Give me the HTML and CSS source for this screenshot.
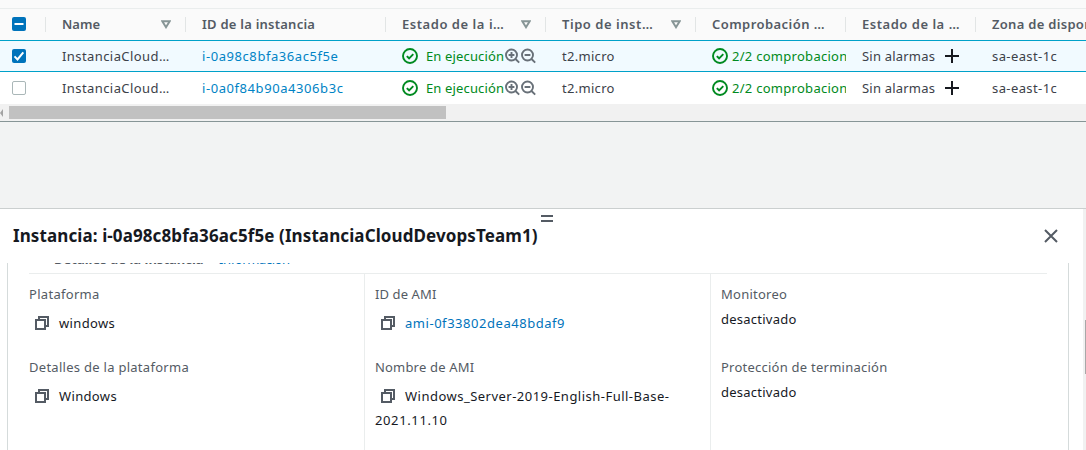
FILE: index.html
```html
<!DOCTYPE html>
<html lang="es">
<head>
<meta charset="utf-8">
<title>Instancias</title>
<link rel="stylesheet" href="styles.css">
</head>
<body>
<svg class="defs" width="0" height="0">
  <symbol id="ok" viewBox="0 0 16 16"><circle cx="8" cy="8" r="7"/><path d="M4.8 8.1l2.3 2.2 4.2-4.2"/></symbol>
  <symbol id="plus-lens" viewBox="0 0 16 16"><circle cx="6.5" cy="7" r="5.5"/><path d="M10.5 11l3.7 3.7M3.6 7h5.8M6.5 4.1v5.8"/></symbol>
  <symbol id="minus-lens" viewBox="0 0 16 16"><circle cx="6.5" cy="7" r="5.5"/><path d="M10.5 11l3.7 3.7M3.6 7h5.8"/></symbol>
  <symbol id="copy" viewBox="0 0 14 14"><path d="M1 4h9v9H1zM4 4V1h9v9h-3"/></symbol>
  <symbol id="sort" viewBox="0 0 10 9"><path d="M1.3 1.3h7.4L5 7.2z"/></symbol>
</svg>
<section class="instances">
  <div class="toolbar"></div>
  <div class="row head">
    <div class="pick"><span class="box on"><svg viewBox="0 0 14 14"><path d="M2.5 7h9"/></svg></span></div>
    <div class="cell"><span class="t-name">Name</span><svg class="sort"><use href="#sort"/></svg></div>
    <div class="cell"><span class="t-id">ID de la instancia</span></div>
    <div class="cell"><span class="t-state">Estado de la i…</span><svg class="sort"><use href="#sort"/></svg></div>
    <div class="cell"><span class="t-type">Tipo de inst…</span><svg class="sort"><use href="#sort"/></svg></div>
    <div class="cell"><span class="t-check">Comprobación …</span></div>
    <div class="cell"><span class="t-alarm">Estado de la …</span></div>
    <div class="cell"><span class="t-zone">Zona de disponibilidad</span></div>
  </div>
  <div class="row selected">
    <div class="pick"><span class="box on"><svg viewBox="0 0 14 14"><path d="M2.5 7.4l3 3L11.3 3.3"/></svg></span></div>
    <div class="cell"><span class="d-name">InstanciaCloud…</span></div>
    <div class="cell"><a class="d-id">i-0a98c8bfa36ac5f5e</a></div>
    <div class="cell green"><svg class="ok"><use href="#ok"/></svg><span class="d-state">En ejecución</span><svg class="lens"><use href="#plus-lens"/></svg><svg class="lens"><use href="#minus-lens"/></svg></div>
    <div class="cell"><span class="d-type">t2.micro</span></div>
    <div class="cell green"><svg class="ok"><use href="#ok"/></svg><span class="d-check">2/2 comprobaciones</span></div>
    <div class="cell"><span class="d-alarm">Sin alarmas</span><svg class="add" viewBox="0 0 14 14"><path d="M7 0v14M0 7h14"/></svg></div>
    <div class="cell"><span class="d-zone">sa-east-1c</span></div>
  </div>
  <div class="row">
    <div class="pick"><span class="box"></span></div>
    <div class="cell"><span class="d-name">InstanciaCloud…</span></div>
    <div class="cell"><a class="d-id">i-0a0f84b90a4306b3c</a></div>
    <div class="cell green"><svg class="ok"><use href="#ok"/></svg><span class="d-state">En ejecución</span><svg class="lens"><use href="#plus-lens"/></svg><svg class="lens"><use href="#minus-lens"/></svg></div>
    <div class="cell"><span class="d-type">t2.micro</span></div>
    <div class="cell green"><svg class="ok"><use href="#ok"/></svg><span class="d-check">2/2 comprobaciones</span></div>
    <div class="cell"><span class="d-alarm">Sin alarmas</span><svg class="add" viewBox="0 0 14 14"><path d="M7 0v14M0 7h14"/></svg></div>
    <div class="cell"><span class="d-zone">sa-east-1c</span></div>
  </div>
  <div class="hscroll"><svg viewBox="0 0 3 8"><path d="M3 0v8L0 4z"/></svg><div class="hthumb"></div></div>
</section>
<section class="panel">
  <div class="grip"></div>
  <div class="main">
    <header class="title"><h1>Instancia: i-0a98c8bfa36ac5f5e (InstanciaCloudDevopsTeam1)</h1>
      <svg class="close" viewBox="0 0 14 14"><path d="M1 1l12 12M13 1L1 13"/></svg></header>
    <div class="card">
      <div class="clipped"><div class="clipped-text"><b>Detalles de la instancia</b><a>Información</a></div></div>
      <div class="columns">
        <div class="col">
          <div class="field"><div class="label"><span class="l-plat">Plataforma</span></div><div class="value copyable"><svg class="copy"><use href="#copy"/></svg><span class="v-win">windows</span></div></div>
          <div class="field"><div class="label"><span class="l-det">Detalles de la plataforma</span></div><div class="value copyable"><svg class="copy"><use href="#copy"/></svg><span class="v-win">Windows</span></div></div>
        </div>
        <div class="col">
          <div class="field"><div class="label"><span class="l-ami">ID de AMI</span></div><div class="value copyable"><svg class="copy"><use href="#copy"/></svg><a class="v-ami">ami-0f33802dea48bdaf9</a></div></div>
          <div class="field"><div class="label"><span class="l-nom">Nombre de AMI</span></div><div class="value copyable"><svg class="copy"><use href="#copy"/></svg><span class="v-server">Windows_Server-2019-English-Full-Base-</span><br><span class="v-date">2021.11.10</span></div></div>
        </div>
        <div class="col">
          <div class="field"><div class="label"><span class="l-mon">Monitoreo</span></div><div class="value"><span class="v-des">desactivado</span></div></div>
          <div class="field"><div class="label"><span class="l-prot">Protección de terminación</span></div><div class="value"><span class="v-des">desactivado</span></div></div>
        </div>
      </div>
    </div>
  </div>
  <div class="vscroll"><div class="vthumb"></div></div>
</section>
</body>
</html>
```
FILE: styles.css
```css
* { box-sizing: border-box; }
body { margin: 0; width: 1086px; height: 450px; overflow: hidden; background: #f2f3f3; color: #16191f; font: 13px/24px "Noto Sans", sans-serif; display: flex; flex-direction: column; }
svg { fill: none; flex: none; }
.defs { position: absolute; }
a { color: #0073bb; }

/* Instances table */
.instances { height: 122px; border-bottom: 1px solid #879596; background: #fff; flex: none; overflow: hidden; }
.toolbar { height: 9px; background: #fafafa; border-bottom: 1px solid #eaeded; }
.row { height: 32px; width: 1136px; display: grid; grid-template-columns: 45px 140px 200px 160px 150px 150px 130px 161px; align-items: center; color: #3c4149; }
.row a { color: #0083c5; }
.head { height: 31px; background: #fafafa; color: #545b64; font-weight: 600; }
.selected { background: #f1faff; border-top: 1px solid #00a1c9; border-bottom: 1px solid #00a1c9; }
.pick { padding-left: 12px; }
.head .pick { padding-bottom: 1px; }
.box { display: block; width: 14px; height: 14px; border: 1px solid #aab7b8; border-radius: 2px; background: #fff; }
.box.on { background: #0073bb; border: 0; }
.box svg { display: block; width: 14px; height: 14px; stroke: #fff; stroke-width: 2; }
.cell { padding-left: 17px; display: flex; align-items: center; white-space: nowrap; overflow: hidden; }
.head .cell { height: 15px; border-left: 1px solid #e2e5e5; padding-left: 16px; line-height: 15px; overflow: visible; }
.row .green { color: #008a20; width: calc(100% + 1px); }
.sort { width: 10px; height: 9px; margin-left: auto; margin-right: 14px; stroke: #879596; stroke-width: 2; }
.t-id { letter-spacing: .24px; }
.t-state { letter-spacing: .54px; }
.t-type { letter-spacing: .54px; }
.t-check { letter-spacing: .44px; }
.t-alarm { letter-spacing: .52px; }
.t-zone { letter-spacing: .3px; }
.d-name { letter-spacing: .42px; }
.d-id { letter-spacing: .57px; }
.d-type { letter-spacing: .3px; }
.d-check { letter-spacing: .28px; }
.d-zone { letter-spacing: .4px; }
.ok { width: 16px; height: 16px; stroke: #008a20; stroke-width: 1.9; margin-right: 4px; }
.d-state { width: 79px; margin-left: 4px; letter-spacing: .14px; }
.lens { width: 16px; height: 16px; stroke: #687078; stroke-width: 1.9; }
.d-alarm { width: 83px; letter-spacing: .2px; }
.add { width: 14px; height: 14px; stroke: #16191f; stroke-width: 2; }
.hscroll { height: 17px; background: #f1f1f1; display: flex; align-items: center; }
.hscroll svg { width: 3px; height: 8px; fill: #a3a3a3; }
.hthumb { width: 437px; height: 13px; background: #c1c1c1; margin-left: 6px; }

/* Details panel */
.panel { margin-top: 86px; height: 242px; border-top: 1px solid #cbcfcf; background: #fff; display: flex; position: relative; }
.grip { position: absolute; left: 541px; top: 6px; width: 12px; height: 7px; border-top: 2px solid #545b64; border-bottom: 2px solid #545b64; }
.main { width: 1083px; display: flex; flex-direction: column; }
.title { height: 54px; padding: 0 25px 0 13px; display: flex; align-items: center; justify-content: space-between; flex: none; }
h1 { margin: 0; font-size: 17px; line-height: 24px; font-weight: 700; letter-spacing: .1px; white-space: nowrap; }
.close { width: 14px; height: 14px; stroke: #545b64; stroke-width: 2; }
.card { margin-left: 7px; width: 1062px; height: 187px; border: solid #d5dbdb; border-width: 0 1px; padding: 0 21px; }
.clipped { height: 11px; border-bottom: 1px solid #eaeded; overflow: hidden; }
.clipped-text { margin: -14px 0 0 25px; height: 16px; line-height: 21px; overflow: hidden; display: flex; gap: 15px; color: #545b64; }
.clipped-text a { letter-spacing: -.4px; }
.clipped-text b { width: 150px; white-space: nowrap; }
.columns { display: grid; grid-template-columns: 335px 346px 1fr; height: 176px; }
.col { padding: 8px 0 0 10px; }
.col:first-child { padding-left: 0; }
.col + .col { border-left: 1px solid #eaeded; }
.field { height: 73px; }
.label { color: #545b64; }
.l-plat { letter-spacing: .3px; }
.l-det { letter-spacing: .28px; }
.l-ami { letter-spacing: .1px; }
.l-nom { letter-spacing: .18px; }
.l-mon { letter-spacing: .24px; }
.l-prot { letter-spacing: .24px; }
.value { white-space: nowrap; line-height: 24px; margin-top: 1px; }
.value.copyable { margin-top: 5px; }
.v-win { letter-spacing: .35px; }
.v-ami { letter-spacing: .54px; }
.v-server { letter-spacing: .48px; }
.v-date { letter-spacing: .62px; }
.v-des { letter-spacing: .24px; }
.copy { width: 14px; height: 14px; margin: 0 10px 0 6px; stroke: #545b64; stroke-width: 2; vertical-align: -2px; }
.vscroll { width: 3px; background: #f1f1f1; padding: 111px 0 0 2px; }
.vthumb { width: 1px; height: 54px; background: #a8a8a8; }
```
